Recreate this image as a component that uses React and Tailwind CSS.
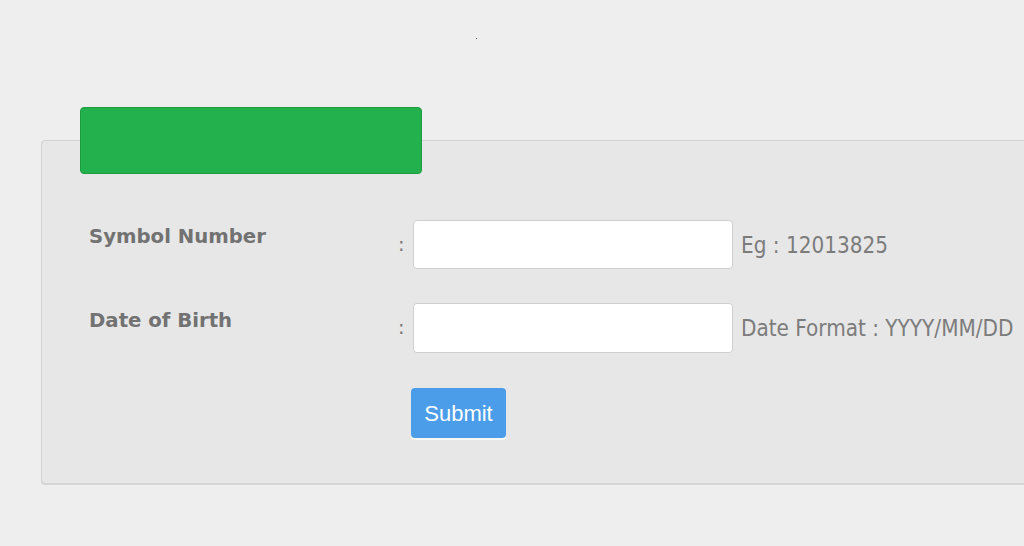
export default function App() {
  const rows = [
    { label: "Symbol Number", hint: "Eg : 12013825", h: "h-[49px]" },
    { label: "Date of Birth", hint: "Date Format : YYYY/MM/DD", h: "h-[50px]" },
  ];

  return (
    <div className="h-[546px] w-[1024px] overflow-hidden bg-[#eeeeee] font-['DejaVu_Sans',sans-serif]">
      {/* stray dot */}
      <div className="h-[140px] pl-[476px] pt-[38px]">
        <div className="h-px w-px bg-[#555]" />
      </div>

      {/* Result panel */}
      <div className="ml-[41px] h-[344px] w-[1100px] rounded border border-[#d3d3d3] bg-[#e7e7e7] pl-[38px] shadow-[0_1px_0_#d6d6d6]">
        <div className="-mt-[34px] h-[67px] w-[342px] rounded border border-[#1e9c40] bg-[#23b14d]" />

        <form className="mt-[46px] pl-[9px]" onSubmit={(e) => e.preventDefault()}>
          {rows.map((r, i) => (
            <div key={r.label} className={`flex items-center ${i > 0 ? "mt-[34px]" : ""}`}>
              <label className="mb-[15px] w-[309px] text-[19.7px] leading-6 font-bold text-[#727272]">
                {r.label}
              </label>
              <span className="w-[15px] text-[19.5px] leading-6 text-[#777]">:</span>
              <input
                type="text"
                className={`${r.h} w-[320px] rounded border border-[#cfcfcf] bg-white px-3 outline-none`}
              />
              <span className="ml-[8px] whitespace-nowrap font-['DejaVu_Sans_Condensed','DejaVu_Sans',sans-serif] text-[22.3px] leading-6 text-[#7c7c7c]">
                {r.hint}
              </span>
            </div>
          ))}

          <div className="mt-[35px] pl-[322px]">
            <button
              type="submit"
              className="h-[50px] w-[95px] rounded bg-[#4b9de9] font-['Liberation_Sans',sans-serif] text-[22px] text-white shadow-[0_2px_0_#f7f7f7]"
            >
              Submit
            </button>
          </div>
        </form>
      </div>
    </div>
  );
}
